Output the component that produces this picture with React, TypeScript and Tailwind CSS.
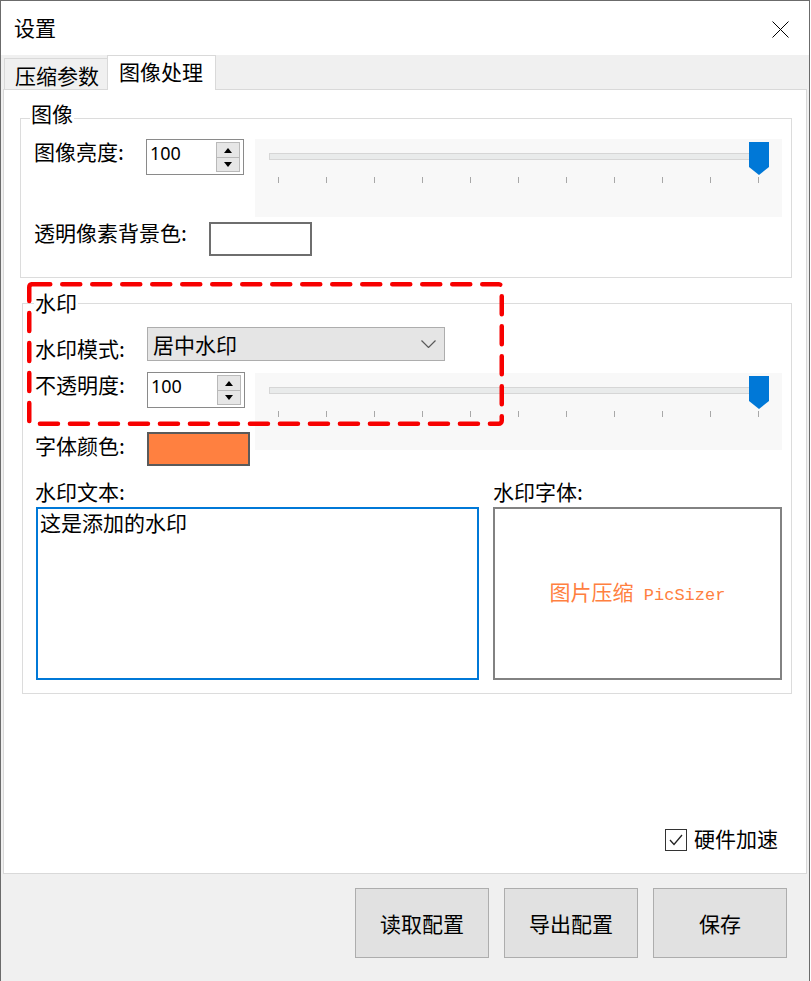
import React from 'react';

const ticks = Array.from({ length: 11 });

const Spin: React.FC = () => (
  <div className="w-[98px] h-[36px] border border-[#8a8a8a] bg-white flex shrink-0">
    <span className="ml-[3px] mt-[2px] text-[18px] leading-[22px] font-['Noto_Sans',sans-serif] text-black">100</span>
    <div className="ml-auto mr-[3px] mt-[2px] w-[24px] flex flex-col">
      <div className="h-[16px] bg-[#e6e6e6] border border-[#b9b9b9] flex items-center justify-center">
        <svg width="8" height="5" viewBox="0 0 8 5">
          <path d="M0 5L4 0L8 5Z" fill="#000" />
        </svg>
      </div>
      <div className="h-[14px] bg-[#e6e6e6] border border-t-0 border-[#b9b9b9] flex items-center justify-center">
        <svg width="8" height="5" viewBox="0 0 8 5">
          <path d="M0 0L8 0L4 5Z" fill="#000" />
        </svg>
      </div>
    </div>
  </div>
);

const Slider: React.FC<{ className: string }> = ({ className }) => (
  <div className={`relative w-[527px] bg-[#f8f8f8] shrink-0 ${className}`}>
    <div className="ml-[14px] mt-[14px] w-[500px] h-[7px] bg-[#e9ebeb] border border-[#d6d6d6]" />
    <div className="ml-[23px] mt-[17px] w-[481px] flex justify-between">
      {ticks.map((_, i) => (
        <div key={i} className="w-px h-[6px] bg-[#a8a8a8]" />
      ))}
    </div>
    <svg className="absolute left-[494px] top-[3px]" width="20" height="33" viewBox="0 0 20 33">
      <path d="M0 0H20V25L10 33L0 25Z" fill="#0078d7" />
    </svg>
  </div>
);

const Label: React.FC<{ className?: string; children: React.ReactNode }> = ({ className = '', children }) => (
  <div className={`text-[21px] leading-[21px] text-black whitespace-nowrap shrink-0 ${className}`}>{children}</div>
);

export default function App() {
  return (
    <div className="relative w-[810px] h-[981px] bg-[#f0f0f0] border-l border-r border-t border-[#6b6b6b] font-['Noto_Sans_CJK_SC',sans-serif] overflow-hidden">
      {/* title bar */}
      <div className="h-[54px] bg-white flex items-start justify-between">
        <Label className="ml-[13px] mt-[16px]">设置</Label>
        <svg className="mt-[20px] mr-[20px]" width="17" height="17" viewBox="0 0 17 17">
          <path d="M0.5 0.5L16.5 16.5M16.5 0.5L0.5 16.5" stroke="#000" strokeWidth="1" />
        </svg>
      </div>

      {/* tabs */}
      <div className="h-[34px] flex items-end pl-[3px]">
        <div className="w-[103px] h-[31px] border-t border-l border-[#d9d9d9] bg-[#f0f0f0]">
          <Label className="ml-[10px] mt-[6px]">压缩参数</Label>
        </div>
        <div className="relative z-10 w-[109px] h-[35px] -mb-px border-t border-l border-r border-[#d9d9d9] bg-white">
          <Label className="ml-[11px] mt-[5px]">图像处理</Label>
        </div>
      </div>

      {/* panel */}
      <div className="ml-[2px] w-[804px] h-[785px] bg-white border border-[#d9d9d9]">
        {/* 图像 group */}
        <div className="relative ml-[16px] mt-[28px] w-[772px] h-[160px] border border-[#dcdcdc]">
          <Label className="absolute left-[9px] top-[-16px] bg-white px-[1px]">图像</Label>
          <div className="pl-[13px] pt-[20px]">
            <div className="flex items-start">
              <Label className="w-[112px] mt-[2px]">图像亮度:</Label>
              <Spin />
              <Slider className="ml-[11px] h-[78px]" />
            </div>
            <div className="flex items-start mt-[5px]">
              <Label className="w-[175px]">透明像素背景色:</Label>
              <div className="w-[103px] h-[34px] border-2 border-[#6e6e6e] bg-white" />
            </div>
          </div>
        </div>

        {/* 水印 group */}
        <div className="relative ml-[18px] mt-[25px] w-[770px] h-[391px] border border-[#dcdcdc]">
          <Label className="absolute left-[11px] top-[-12px] bg-white px-[1px]">水印</Label>
          <div className="pl-[12px] pt-[23px]">
            <div className="flex items-start">
              <Label className="w-[112px] mt-[11px]">水印模式:</Label>
              <div className="w-[298px] h-[34px] bg-[#e5e5e5] border border-[#adadad] flex items-center justify-between">
                <span className="ml-[5px] text-[21px] leading-[21px] text-black">居中水印</span>
                <svg className="mr-[8px]" width="15" height="8" viewBox="0 0 15 8">
                  <path d="M0.5 0.5L7.5 7.5L14.5 0.5" fill="none" stroke="#5a5a5a" strokeWidth="1.2" />
                </svg>
              </div>
            </div>
            <div className="flex items-start mt-[11px]">
              <div className="w-[210px] flex flex-col shrink-0">
                <div className="flex items-start">
                  <Label className="w-[112px] mt-[2px]">不透明度:</Label>
                  <Spin />
                </div>
                <div className="flex items-start mt-[24px]">
                  <Label className="w-[112px] mt-[3px]">字体颜色:</Label>
                  <div className="w-[103px] h-[34px] shrink-0 border-2 border-[#5a5a5a] bg-[#ff8040]" />
                </div>
              </div>
              <Slider className="ml-[10px] mt-px h-[77px]" />
            </div>
            <div className="flex mt-[15px]">
              <Label className="w-[458px]">水印文本:</Label>
              <Label>水印字体:</Label>
            </div>
            <div className="flex mt-[5px] ml-px">
              <div className="w-[443px] h-[173px] border-2 border-[#0078d7] bg-white">
                <Label className="ml-[2px] mt-[3px]">这是添加的水印</Label>
              </div>
              <div className="ml-[14px] w-[289px] h-[173px] border-2 border-[#828282] bg-white flex items-center justify-center">
                <span className="text-[21px] leading-[21px] text-[#ff8040]">
                  图片压缩<span className="font-['Liberation_Mono',monospace] text-[17px] whitespace-pre"> PicSizer</span>
                </span>
              </div>
            </div>
          </div>
        </div>

        {/* hardware accel */}
        <div className="flex justify-end items-start mt-[134px] pr-[28px]">
          <div className="mt-px w-[22px] h-[22px] border border-[#333] bg-white flex items-center justify-center">
            <svg width="14" height="12" viewBox="0 0 14 12">
              <path d="M1 6L5 10.5L13 1" fill="none" stroke="#222" strokeWidth="1.3" />
            </svg>
          </div>
          <Label className="ml-[7px]">硬件加速</Label>
        </div>
      </div>

      {/* buttons */}
      <div className="flex justify-end gap-[15px] mt-[14px] pr-[22px]">
        {['读取配置', '导出配置', '保存'].map((t) => (
          <button
            key={t}
            className="w-[134px] h-[70px] bg-[#e1e1e1] border border-[#adadad] flex items-center justify-center text-[21px] leading-[21px] text-black"
          >
            {t}
          </button>
        ))}
      </div>

      {/* red dashed highlight */}
      <svg className="absolute left-[26px] top-[281px] pointer-events-none" width="477" height="144" viewBox="0 0 477 144">
        <rect
          x="2.25"
          y="2.25"
          width="472.5"
          height="139.5"
          rx="3"
          fill="none"
          stroke="#f70000"
          strokeWidth="4.5"
          strokeDasharray="18 12"
          strokeLinecap="round"
        />
      </svg>
    </div>
  );
}
